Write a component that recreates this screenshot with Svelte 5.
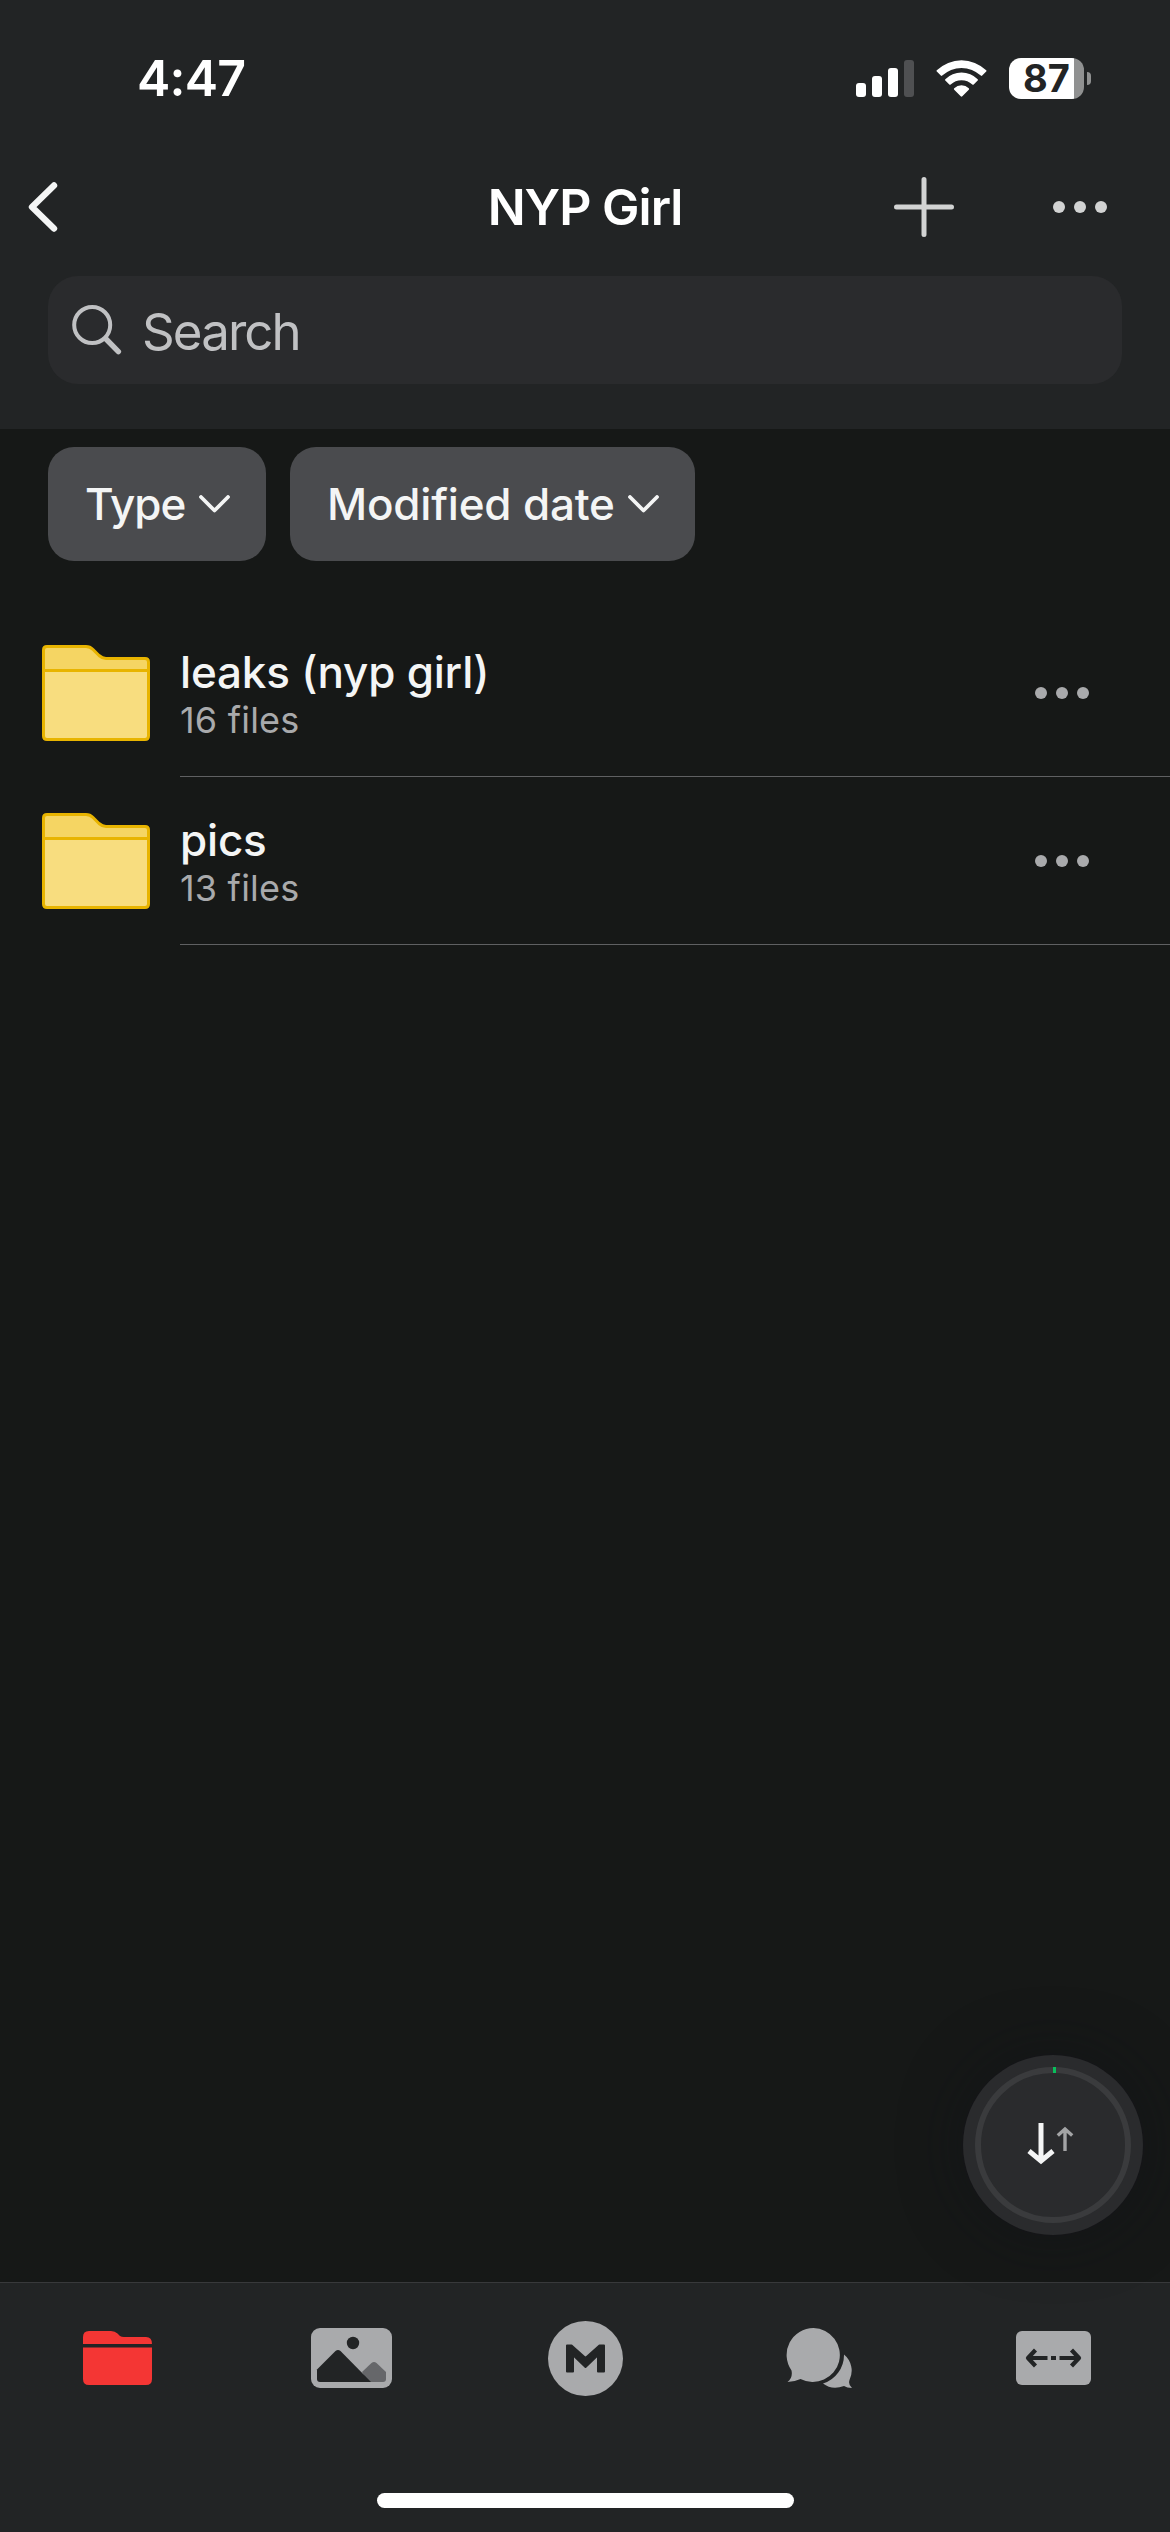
<script>
  let battery = 87;

  let filters = ["Type", "Modified date"];

  let folders = [
    { name: "leaks (nyp girl)", files: 16 },
    { name: "pics", files: 13 },
  ];
</script>

<div class="screen">
  <header>
    <div class="status">
      <span class="time">4:47</span>
      <div class="indicators">
        <svg class="signal" width="58" height="37" viewBox="0 0 58 37" fill="#fff">
          <rect x="0" y="23" width="10" height="14" rx="3" />
          <rect x="16" y="16" width="10" height="21" rx="3" />
          <rect x="32" y="8" width="10" height="29" rx="3" />
          <rect x="48" y="0" width="10" height="37" rx="3" fill="#4f5052" />
        </svg>
        <svg class="wifi" width="51" height="37" viewBox="0 0 51 37" fill="#fff">
          <path d="M0.8 10.3A35.5 35.5 0 0 1 50.2 10.3Q50.8 11 50.2 11.6L46.2 15.6Q45.5 16.2 44.8 15.6A28 28 0 0 0 6.2 15.6Q5.5 16.2 4.8 15.6L0.8 11.6Q0.2 11 0.8 10.3Z" />
          <path d="M9.3 19.2A23 23 0 0 1 41.7 19.2Q42.3 19.9 41.7 20.5L37.7 24.5Q37 25.1 36.3 24.5A15.6 15.6 0 0 0 14.7 24.5Q14 25.1 13.3 24.5L9.3 20.5Q8.7 19.9 9.3 19.2Z" />
          <path d="M18.2 28.2A10.8 10.8 0 0 1 32.8 28.2Q33.5 29 32.8 29.7L26.3 36.3Q25.5 37 24.7 36.3L18.2 29.7Q17.5 29 18.2 28.2Z" />
        </svg>
        <div class="battery">
          <div class="cell" style="--level: {battery}%"><span>{battery}</span></div>
          <div class="nub"></div>
        </div>
      </div>
    </div>

    <div class="nav">
      <svg class="back" width="30" height="50" viewBox="0 0 30 50">
        <path d="M26 3.5L4 25L26 46.5" fill="none" stroke="#f4f5f5" stroke-width="6.4" stroke-linecap="round" stroke-linejoin="round" />
      </svg>
      <h1>NYP Girl</h1>
      <div class="actions">
        <svg width="60" height="60" viewBox="0 0 60 60">
          <path d="M30 2.5V57.5M2.5 30H57.5" stroke="#d2d3d3" stroke-width="5" stroke-linecap="round" />
        </svg>
        <svg width="54" height="12" viewBox="0 0 54 12" fill="#d2d3d3">
          <circle cx="6" cy="6" r="6" />
          <circle cx="27" cy="6" r="6" />
          <circle cx="48" cy="6" r="6" />
        </svg>
      </div>
    </div>

    <div class="search">
      <svg width="50" height="50" viewBox="0 0 50 50" fill="none" stroke="#c0c1c3" stroke-linecap="round">
        <circle cx="20.2" cy="20" r="18" stroke-width="4" />
        <path d="M34 34L46.4 46.6" stroke-width="5.4" />
      </svg>
      <span>Search</span>
    </div>
  </header>

  <div class="filters">
    {#each filters as filter}
      <div class="chip">
        <span>{filter}</span>
        <svg width="31" height="18" viewBox="0 0 31 18">
          <path d="M2 2L15.5 15.5L29 2" fill="none" stroke="#f4f5f5" stroke-width="3.8" stroke-linecap="round" stroke-linejoin="round" />
        </svg>
      </div>
    {/each}
  </div>

  <main>
    {#each folders as folder}
      <div class="row">
        <svg class="folder" width="108" height="96" viewBox="0 0 108 96">
          <path d="M5 1.5H44Q48 1.5 51 4.5L57 10.5Q60.5 13.5 64 13.5H103Q106.5 13.5 106.5 17V25.5H1.5V5Q1.5 1.5 5 1.5Z" fill="#f5d563" />
          <path d="M1.5 25.5H106.5V91Q106.5 94.5 103 94.5H5Q1.5 94.5 1.5 91Z" fill="#f8dd7f" />
          <path d="M1.5 25.5H106.5M5 1.5H44Q48 1.5 51 4.5L57 10.5Q60.5 13.5 64 13.5H103Q106.5 13.5 106.5 17V91Q106.5 94.5 103 94.5H5Q1.5 94.5 1.5 91V5Q1.5 1.5 5 1.5Z" fill="none" stroke="#e8b400" stroke-width="3" />
        </svg>
        <div class="info">
          <div class="text">
            <span class="name">{folder.name}</span>
            <span class="count">{folder.files} files</span>
          </div>
          <svg width="54" height="12" viewBox="0 0 54 12" fill="#a9aaac">
            <circle cx="6" cy="6" r="6" />
            <circle cx="27" cy="6" r="6" />
            <circle cx="48" cy="6" r="6" />
          </svg>
        </div>
      </div>
    {/each}
  </main>

  <div class="transfers">
    <svg width="180" height="180" viewBox="0 0 180 180" fill="none">
      <circle cx="90" cy="90" r="75" stroke="#3a3b3d" stroke-width="6" />
      <path d="M90 15H93" stroke="#09bf5b" stroke-width="6" />
      <path d="M78 68V107M66 96L78 106L90 96" stroke="#f4f5f5" stroke-width="5" />
      <path d="M102 96V74M94.8 80.5L102 74L109.2 80.5" stroke="#a3a4a5" stroke-width="3.4" />
    </svg>
  </div>

  <footer>
    <div class="tabs">
      <div class="tab">
        <svg width="69" height="54" viewBox="0 0 69 54" fill="#f43634">
          <path d="M6 0H28Q32 0 34.5 2.5L37 5Q38.5 6 41 6H63Q69 6 69 13H0V6Q0 0 6 0Z" />
          <path d="M0 16.5H69V48Q69 54 63 54H6Q0 54 0 48Z" />
        </svg>
      </div>
      <div class="tab">
        <svg width="81" height="60" viewBox="0 0 81 60">
          <rect width="81" height="60" rx="9" fill="#a9aaac" />
          <path d="M51 44L60.5 35Q63 33 65.500 35L75 44V51Q75 54 72 54H57Z" fill="#66676a" />
          <path d="M6 41.500L24.500 23Q27 21 29.500 23L60 54H9Q6 54 6 51Z" fill="#222425" />
          <circle cx="42" cy="15" r="6.2" fill="#222425" />
        </svg>
      </div>
      <div class="tab">
        <svg width="75" height="75" viewBox="0 0 75 75">
          <circle cx="37.5" cy="37.5" r="37.5" fill="#a9aaac" />
          <path d="M19 24.500H23.500L37.500 37L51.500 24.500H56V50.500H50V34L37.500 46L25 34V50.500H19Z" fill="#222425" stroke="#222425" stroke-width="2" stroke-linejoin="round" />
        </svg>
      </div>
      <div class="tab">
        <svg width="67" height="60" viewBox="0 0 67 60" fill="#a9aaac">
          <path d="M27.500 0A27 27 0 1 1 14.500 51Q8 54 1.500 54Q7 50 5.500 42.500A27 27 0 0 1 27.500 0Z" />
          <path d="M58 26.500A21 21 0 0 1 63.500 52Q62 57 66 60Q61 60 58 58Q46 62.500 37 55.500A30 30 0 0 0 58 26.500Z" />
        </svg>
      </div>
      <div class="tab">
        <svg width="75" height="54" viewBox="0 0 75 54">
          <rect width="75" height="54" rx="6" fill="#a9aaac" />
          <path d="M19.500 19L12 27L19.500 35M12 27H31.500M55.500 19L63 27L55.500 35M63 27H43.500M35 27H40" fill="none" stroke="#222425" stroke-width="4.2" stroke-linejoin="round" />
        </svg>
      </div>
    </div>
    <div class="home"></div>
  </footer>
</div>

<style>
  :global(body) {
    margin: 0;
    background: #161817;
  }

  .screen {
    display: flex;
    flex-direction: column;
    position: relative;
    width: 1170px;
    height: 2532px;
    overflow: hidden;
    background: #161817;
    color: #f4f5f5;
    font-family: Inter, "Liberation Sans", sans-serif;
  }

  svg {
    display: block;
    flex: none;
  }

  header {
    box-sizing: border-box;
    height: 429px;
    background: #222425;
  }

  .status {
    box-sizing: border-box;
    display: flex;
    justify-content: space-between;
    align-items: center;
    height: 156px;
    padding: 0 79px 0 137px;
  }

  .time {
    font-size: 50px;
    font-weight: 600;
    letter-spacing: -0.8px;
    color: #fff;
  }

  .indicators {
    display: flex;
    align-items: center;
    gap: 22px;
  }

  .battery {
    display: flex;
    align-items: center;
    gap: 3px;
  }

  .cell {
    display: flex;
    align-items: center;
    justify-content: center;
    width: 75px;
    height: 41px;
    border-radius: 12px;
    background: linear-gradient(to right, #fff var(--level), #909191 var(--level));
    color: #222425;
    font-size: 38px;
    font-weight: 700;
  }

  .nub {
    width: 4px;
    height: 13px;
    border-radius: 0 5px 5px 0;
    background: #909191;
  }

  .nav {
    box-sizing: border-box;
    display: grid;
    grid-template-columns: 1fr auto 1fr;
    align-items: center;
    height: 102px;
  }

  .back {
    margin-left: 28px;
  }

  h1 {
    margin: 0;
    font-size: 50px;
    font-weight: 600;
    letter-spacing: -1px;
    color: #fff;
  }

  .actions {
    display: flex;
    justify-content: flex-end;
    align-items: center;
    gap: 99px;
    padding-right: 63px;
  }

  .search {
    box-sizing: border-box;
    display: flex;
    align-items: center;
    gap: 20px;
    height: 108px;
    margin: 18px 48px 0;
    padding: 2px 24px 0;
    border-radius: 30px;
    background: #2a2b2d;
    color: #c0c1c3;
    font-size: 51px;
    letter-spacing: -1.9px;
  }

  .search svg {
    margin-bottom: 2px;
  }

  .filters {
    display: flex;
    gap: 24px;
    padding: 18px 48px 48px;
  }

  .chip {
    box-sizing: border-box;
    display: flex;
    align-items: center;
    justify-content: space-between;
    height: 114px;
    padding: 0 36px 0 37px;
    border-radius: 26px;
    background: #4a4b4e;
    font-size: 44px;
    font-weight: 500;
    letter-spacing: -0.2px;
  }

  .chip:first-child {
    width: 218px;
    letter-spacing: -1px;
  }

  .chip:last-child {
    width: 405px;
  }

  .row {
    display: flex;
    align-items: center;
    height: 168px;
    padding-left: 42px;
  }

  .info {
    box-sizing: border-box;
    flex: 1;
    display: flex;
    align-items: center;
    justify-content: space-between;
    height: 168px;
    margin-left: 30px;
    padding-right: 81px;
    border-bottom: 1px solid #5f6062;
  }

  .text {
    display: flex;
    flex-direction: column;
    padding-top: 2px;
  }

  .name {
    font-size: 44px;
    font-weight: 500;
    line-height: 52px;
    letter-spacing: -0.2px;
  }

  .count {
    font-size: 36px;
    line-height: 44px;
    letter-spacing: 0.2px;
    color: #a9aaac;
  }

  /* floats over the file list */
  .transfers {
    position: absolute;
    right: 27px;
    bottom: 297px;
    border-radius: 50%;
    background: #2a2b2d;
    box-shadow: 0 0 60px rgba(16, 18, 24, 0.5);
  }

  footer {
    box-sizing: border-box;
    height: 250px;
    margin-top: auto;
    border-top: 1px solid #38393b;
    background: #222425;
  }

  .tabs {
    display: grid;
    grid-template-columns: repeat(5, 1fr);
    height: 150px;
  }

  .tab {
    display: flex;
    align-items: center;
    justify-content: center;
  }

  .home {
    width: 417px;
    height: 15px;
    margin: 60px auto 0;
    border-radius: 8px;
    background: #fff;
  }
</style>
